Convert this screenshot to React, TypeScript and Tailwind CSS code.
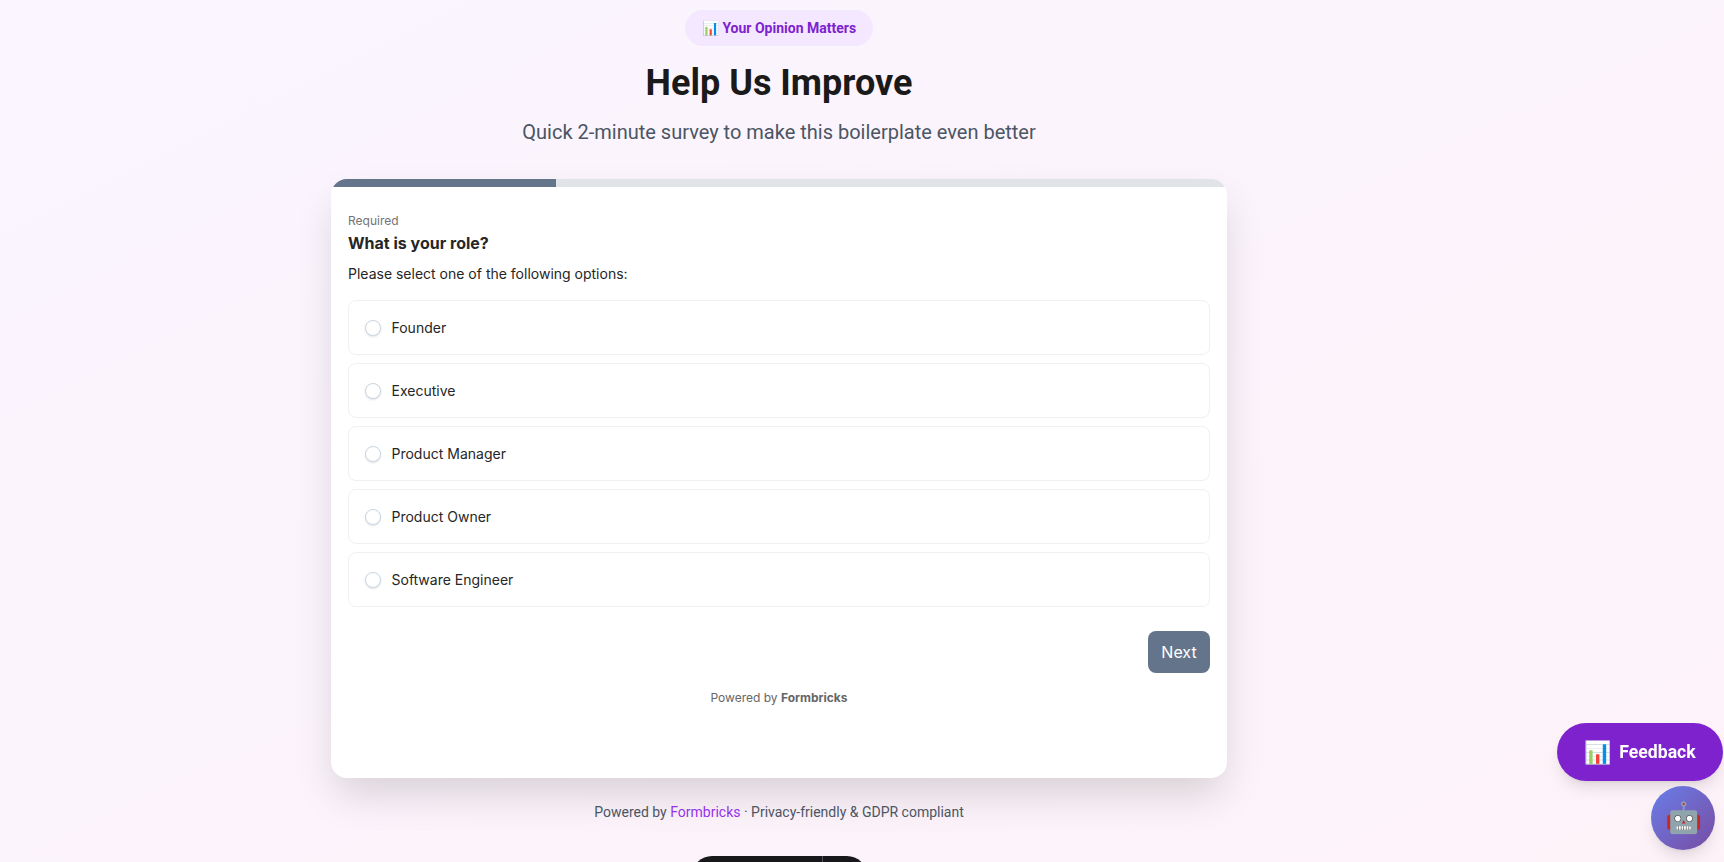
const options = ['Founder', 'Executive', 'Product Manager', 'Product Owner', 'Software Engineer'];

function OptionRow({ label }: { label: string }) {
  return (
    <label className="flex h-[55px] items-center rounded-lg border border-[#eef0f4] bg-white pl-4 text-sm text-[#262626]">
      <span className="h-4 w-4 rounded-full border border-[#cbd5e1] bg-white shadow-[0_1px_2px_rgba(100,116,139,0.2)]" />
      <span className="ml-[10.5px]">{label}</span>
    </label>
  );
}

export default function App() {
  return (
    <div className="relative h-screen overflow-hidden bg-gradient-to-br from-[#faf5ff] to-[#fdf2f8] font-['Roboto',sans-serif]">
      <main className="flex w-[1558px] flex-col items-center pt-[10px]">
        <div className="flex h-9 w-[188px] items-center justify-center rounded-full bg-[#f3e8ff] text-sm font-bold text-[#7e22ce]">
          📊 Your Opinion Matters
        </div>
        <h1 className="mt-[17px] text-4xl font-bold text-[#1a1a1a]">Help Us Improve</h1>
        <p className="mt-[15px] text-xl text-[#4b5563]">Quick 2-minute survey to make this boilerplate even better</p>

        <section className="mt-[33px] h-[599px] w-[896px] overflow-hidden rounded-2xl bg-white font-['Inter',sans-serif] shadow-[0_20px_40px_-5px_rgba(0,0,0,0.15)]">
          <div className="h-2 bg-[#e0e3e8]">
            <div className="h-full w-[225px] bg-[#64748b]" />
          </div>
          <div className="px-[17px] pt-[26px]">
            <p className="text-xs leading-4 text-[#737373]">Required</p>
            <h2 className="mt-[2px] text-base leading-6 font-bold text-[#262626]">What is your role?</h2>
            <p className="mt-[9px] text-sm leading-5 text-[#262626]">Please select one of the following options:</p>
            <div className="mt-4 flex flex-col gap-2">
              {options.map((option) => (
                <OptionRow key={option} label={option} />
              ))}
            </div>
            <div className="mt-6 flex justify-end">
              <button className="h-[42px] w-[62px] rounded-lg bg-[#64748b] text-base font-normal text-white">Next</button>
            </div>
            <p className="mt-[15px] text-center text-xs leading-5 text-[#666666]">
              Powered by <span className="font-bold text-[#666666]">Formbricks</span>
            </p>
          </div>
        </section>

        <p className="mt-6 text-sm leading-5 text-[#4b5563]">
          Powered by <span className="text-[#9333ea]">Formbricks</span> · Privacy-friendly &amp; GDPR compliant
        </p>

        <div className="mt-[34px] flex h-10 w-[175px] shrink-0 justify-end rounded-[20px] bg-[#18181b]">
          <div className="mr-[44px] w-px bg-[#52525b]" />
        </div>
      </main>

      <button className="fixed right-px bottom-[81px] flex h-[58px] w-[166px] items-center justify-center gap-2 rounded-full bg-[#7e22ce] text-[17.6px] font-bold text-white shadow-lg">
        <span className="text-[22px]">📊</span>
        Feedback
      </button>
      <button className="fixed right-[9px] bottom-3 flex h-16 w-16 items-center justify-center rounded-full bg-gradient-to-br from-[#667eea] to-[#764ba2] text-3xl shadow-lg">
        🤖
      </button>
    </div>
  );
}
